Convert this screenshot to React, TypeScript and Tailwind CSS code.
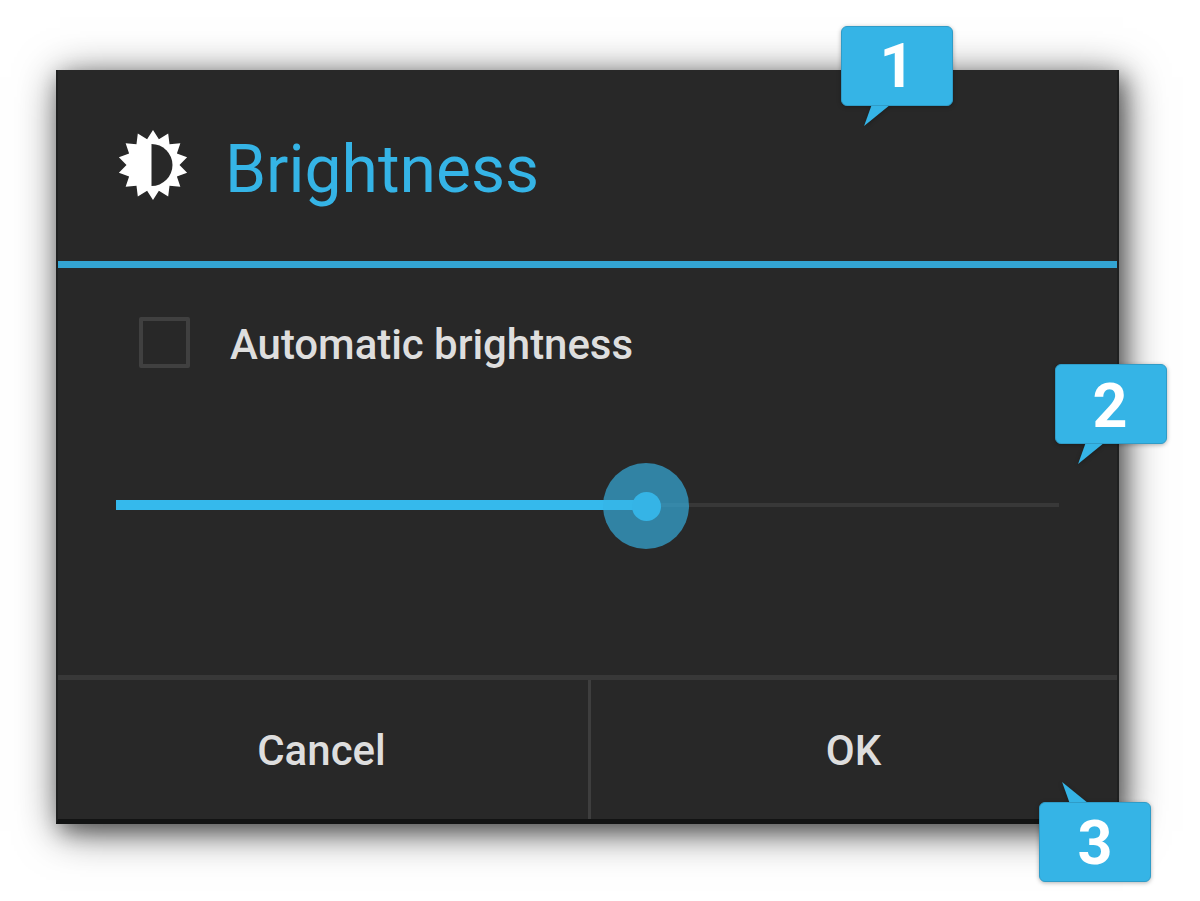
import type { ReactNode } from 'react'

const TEETH = 14

const gearPoints = Array.from({ length: TEETH * 2 }, (_, i) => {
    const radius = i % 2 === 0 ? 35 : 26.5
    const angle = (i * Math.PI) / TEETH
    return `${(35 + radius * Math.sin(angle)).toFixed(2)},${(35 - radius * Math.cos(angle)).toFixed(2)}`
}).join(' ')

function BrightnessIcon() {
    return (
        <svg viewBox="0 0 70 70" className="mb-0.5 h-[70px] w-[70px] shrink-0" aria-hidden="true">
            <polygon points={gearPoints} fill="#fff" />
            <path d="M33.5 14a21 21 0 0 1 0 42Z" fill="#282828" />
        </svg>
    )
}

interface CalloutProps {
    className: string
    flipped?: boolean
    children: ReactNode
}

function Callout({ className, flipped = false, children }: CalloutProps) {
    return (
        <div className={`absolute h-20 w-28 drop-shadow-[0_1px_2px_rgba(0,0,0,0.3)] ${className}`}>
            <svg
                viewBox="0 0 26 22"
                className={flipped ? 'absolute -top-[21px] left-[22px] h-[22px] w-[28px] -scale-y-100' : 'absolute top-[79px] left-[22px] h-[22px] w-[28px]'}
                preserveAspectRatio="none"
                aria-hidden="true"
            >
                <path d="M8 0h17L1 21Z" fill="#35b4e6" />
            </svg>
            <div className="relative flex h-full items-center justify-center rounded-[6px] border border-[#2f9cc8] bg-[#35b4e6] text-[61px] leading-none font-bold text-white">
                {children}
            </div>
        </div>
    )
}

export default function App() {
    return (
        <div className="relative h-[901px] w-[1200px] overflow-hidden bg-white pt-[70px] pl-14 font-['Roboto',sans-serif]">
            <section
                aria-label="Brightness"
                className="flex h-[754px] w-[1063px] flex-col border-x-2 border-b-5 border-x-[#1f2020] border-b-[#121313] bg-[#282828] shadow-[4px_7px_40px_rgba(0,0,0,0.6),5px_7px_20px_rgba(0,0,0,0.4)]"
            >
                <header className="flex h-[198px] items-center gap-[37px] border-b-7 border-[#33a4d2] pl-[60px]">
                    <BrightnessIcon />
                    <h1 className="pt-2 text-[66px] leading-none whitespace-nowrap text-[#35b4e6]">Brightness</h1>
                </header>

                <div className="flex-1">
                    <label className="flex items-center gap-10 pt-[49px] pl-[81px]">
                        <span className="h-[51px] w-[51px] rounded-[2px] border-4 border-[#404040]" />
                        <span className="pt-1 text-[42px] leading-none font-medium tracking-[-0.05px] whitespace-nowrap text-[#dedede]">Automatic brightness</span>
                    </label>

                    <div className="mt-[95px] ml-[58px] flex h-[86px] w-[943px] items-center" role="slider" aria-valuenow={56} aria-valuemin={0} aria-valuemax={100}>
                        <div className="relative flex h-full w-[530px] items-center">
                            <div className="mb-0.5 h-2.5 w-full bg-[#35b9ec]" />
                            <div className="absolute top-0 -right-[43px] flex h-[86px] w-[86px] items-center justify-center rounded-full bg-[#35b4e6]/65">
                                <span className="h-[29px] w-[29px] rounded-full bg-[#35b4e6]" />
                            </div>
                        </div>
                        <div className="mb-0.5 h-1 flex-1 bg-[#383838]" />
                    </div>
                </div>

                <footer className="flex h-[144px] border-t-5 border-[#383838] text-[42px] font-medium text-[#dedede]">
                    <button className="flex w-[530px] items-center justify-center pt-0.5 pr-[3px]">
                        <span className="whitespace-nowrap">Cancel</span>
                    </button>
                    <div className="w-[3px] bg-[#3e3e3e]" />
                    <button className="flex flex-1 items-center justify-center pt-0.5 pr-px">
                        <span className="whitespace-nowrap">OK</span>
                    </button>
                </footer>
            </section>

            <Callout className="top-[26px] left-[841px]">1</Callout>
            <Callout className="top-[364px] left-[1055px]"><span className="pt-1 pr-0.5">2</span></Callout>
            <Callout className="top-[802px] left-[1039px]" flipped><span className="pt-0.5">3</span></Callout>
        </div>
    )
}
